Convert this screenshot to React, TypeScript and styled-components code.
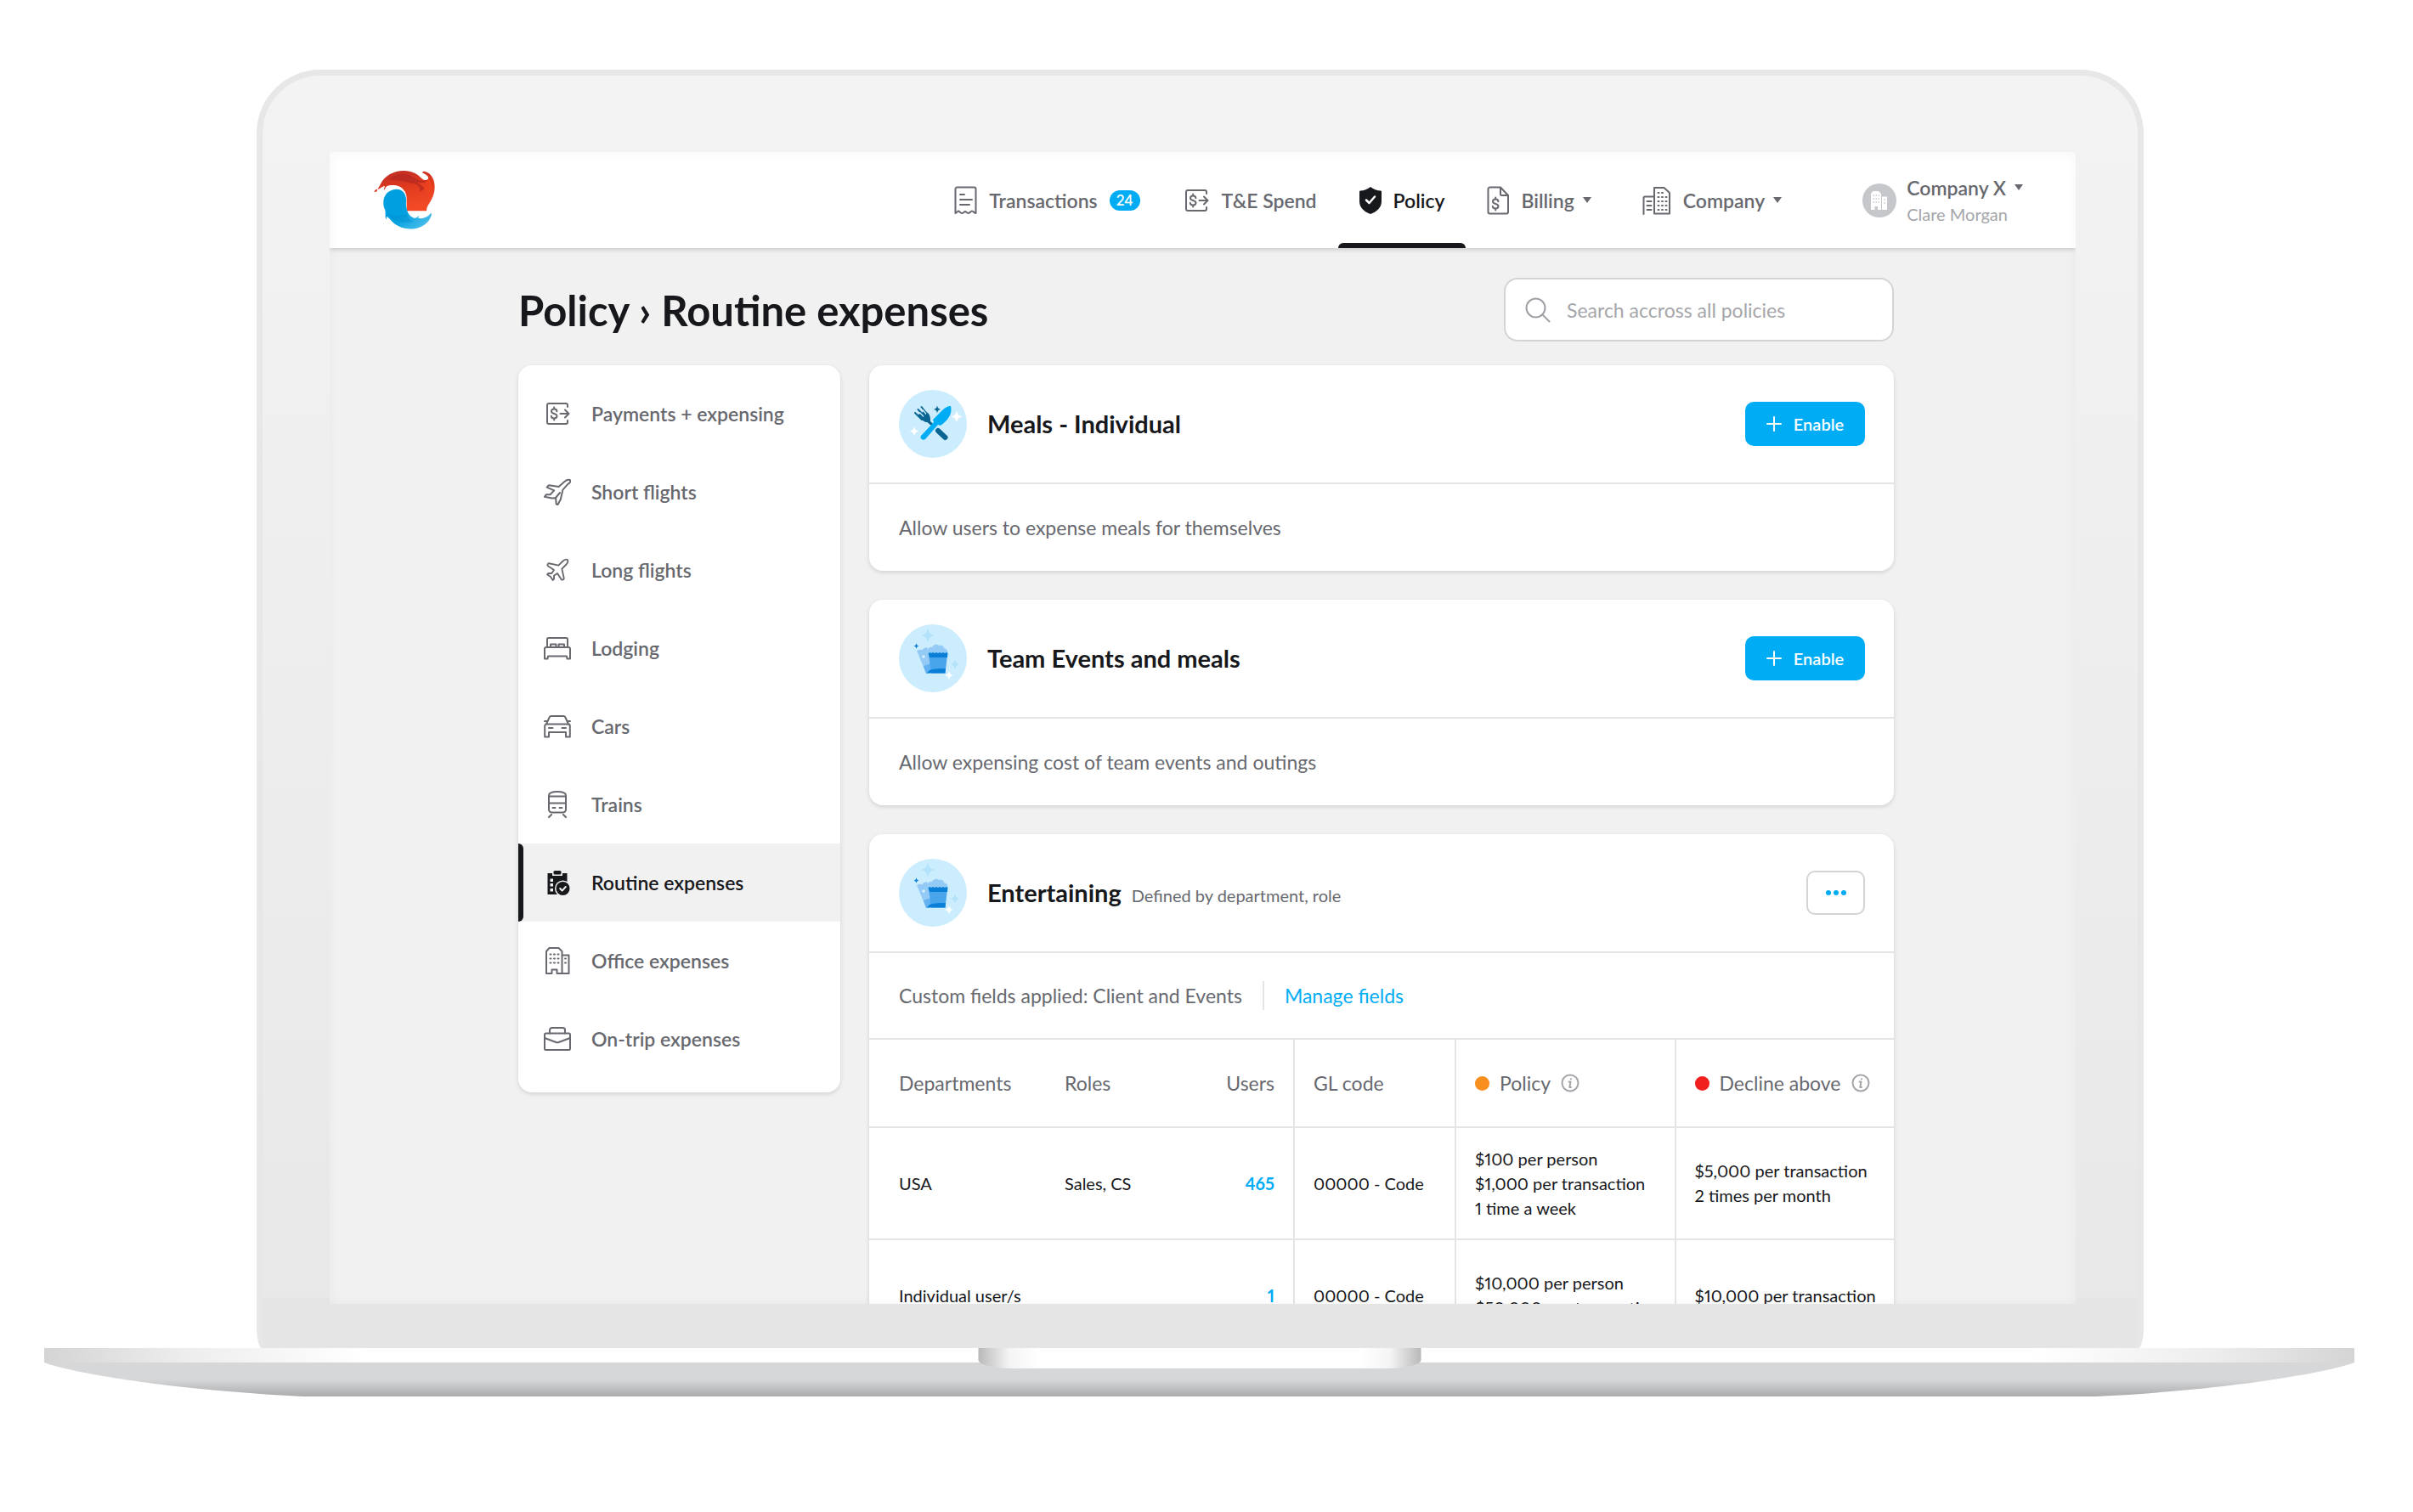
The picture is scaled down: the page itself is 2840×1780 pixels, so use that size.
import React from "react";
import styled, { createGlobalStyle, css } from "styled-components";
import { Plane } from "lucide-react";

const color = {
  ink: "#17181c",
  text: "#67696f",
  muted: "#a5a6aa",
  faint: "#c6c7cb",
  line: "#e4e5e6",
  page: "#f1f1f1",
  blue: "#00adf5",
};

const GlobalStyle = createGlobalStyle`
  *, *::before, *::after { box-sizing: border-box; }
  body { margin: 0; background: #fff; }
  body, button, input { font-family: Lato, "Open Sans", sans-serif; }
`;

/* ---------- laptop ---------- */

const Stage = styled.main`
  display: flex;
  flex-direction: column;
  height: 100vh;
  min-height: 900px;
  padding: 82px 69px 136px 52px;
`;

const Lid = styled.div`
  flex: 1;
  min-height: 0;
  display: flex;
  margin: 0 248px 0 250px;
  padding: 90px 73px 52px 79px;
  border: 7px solid #e7e7e7;
  border-bottom: 0;
  border-radius: 75px 75px 6px 6px / 75px 75px 26px 26px;
  background: linear-gradient(#f3f3f3 0, #e8e8e8 calc(100% - 59px), #e5e5e5 calc(100% - 59px));
`;

const Screen = styled.div`
  position: relative;
  flex: 1;
  min-width: 0;
  overflow: hidden;
  background: ${color.page};
  &::after {
    content: "";
    position: absolute;
    inset: 0;
    box-shadow: inset 0 0 14px rgba(0, 0, 0, 0.04);
    pointer-events: none;
  }
`;

const Base = styled.div`
  position: relative;
`;

const BaseStrip = styled.div`
  height: 17px;
  background: linear-gradient(90deg, #d4d4d4, #ededed 6%, #fff 14%, #fff 86%, #ededed 94%, #d4d4d4);
`;

const BaseShell = styled.svg`
  display: block;
  width: 100%;
  height: 40px;
`;

const Notch = styled.div`
  position: absolute;
  top: 0;
  left: 50%;
  width: 521px;
  height: 24px;
  transform: translateX(-50%);
  border-radius: 0 0 40px 40px / 0 0 10px 10px;
  background: linear-gradient(90deg, #b9b9b9, #f4f4f4 36px, #fff 72px, #fff calc(100% - 72px), #f4f4f4 calc(100% - 36px), #b9b9b9);
`;

/* ---------- top bar ---------- */

const TopBar = styled.header`
  position: relative;
  display: flex;
  align-items: stretch;
  justify-content: space-between;
  height: 113px;
  padding: 0 62px 0 44px;
  background: #fff;
  box-shadow: 0 2px 5px rgba(0, 0, 0, 0.16);
`;

const Brand = styled.a`
  display: flex;
  align-items: center;
`;

const NavGroup = styled.div`
  display: flex;
  gap: 70px;
`;

const Nav = styled.nav`
  display: flex;
`;

const NavItem = styled.a<{ $active?: boolean; $wide?: boolean }>`
  position: relative;
  display: flex;
  align-items: center;
  gap: 14px;
  padding: 0 25px;
  ${(p) => p.$wide && css`margin-left: 10px;`}
  font-size: 23px;
  line-height: 28px;
  font-weight: 600;
  text-decoration: none;
  color: ${(p) => (p.$active ? color.ink : color.text)};
  ${(p) =>
    p.$active &&
    css`
      &::after {
        content: "";
        position: absolute;
        left: 0;
        right: 0;
        bottom: 0;
        height: 6px;
        border-radius: 6px 6px 0 0;
        background: ${color.ink};
      }
    `}
  svg { flex: none; }
`;

const Badge = styled.span`
  display: grid;
  place-items: center;
  width: 36px;
  height: 24px;
  border-radius: 12px;
  background: ${color.blue};
  color: #fff;
  font-size: 17px;
  line-height: 20px;
`;

const Caret = styled.span`
  border: 5px solid transparent;
  border-top: 7px solid ${color.text};
  border-bottom: 0;
`;

const CaretLabel = styled.span`
  display: flex;
  align-items: center;
  gap: 10px;
`;

const Account = styled.button`
  display: flex;
  align-items: center;
  gap: 12px;
  padding: 0;
  border: 0;
  background: none;
  text-align: left;
`;

const Avatar = styled.span`
  display: grid;
  place-items: center;
  width: 40px;
  height: 40px;
  border-radius: 50%;
  background: ${color.faint};
`;

const AccountText = styled.span`
  display: grid;
  gap: 4px;
  font-size: 23px;
  line-height: 28px;
  font-weight: 600;
  color: ${color.text};
`;

const AccountUser = styled.span`
  font-size: 20px;
  line-height: 26px;
  font-weight: 400;
  color: ${color.muted};
`;

/* ---------- page ---------- */

const Page = styled.div`
  padding: 35px 214px 0 222px;
`;

const PageHead = styled.div`
  display: flex;
  align-items: center;
  justify-content: space-between;
  margin-bottom: 28px;
`;

const Title = styled.h1`
  margin: 0;
  font-size: 49px;
  line-height: 60px;
  font-weight: 700;
  color: ${color.ink};
`;

const Search = styled.label`
  display: flex;
  align-items: center;
  gap: 19px;
  width: 459px;
  height: 75px;
  padding: 0 23px;
  border: 2px solid #d3d4d6;
  border-radius: 16px;
  background: #fff;
`;

const SearchInput = styled.input`
  flex: 1;
  min-width: 0;
  padding: 0;
  border: 0;
  outline: 0;
  background: none;
  font-size: 23px;
  line-height: 28px;
  color: ${color.text};
  &::placeholder { color: ${color.muted}; opacity: 1; }
`;

const Columns = styled.div`
  display: grid;
  grid-template-columns: 379px minmax(0, 1fr);
  align-items: start;
  gap: 34px;
`;

const panel = css`
  border-radius: 16px;
  background: #fff;
  box-shadow: 0 2px 5px rgba(0, 0, 0, 0.13);
`;

const Sidebar = styled.nav`
  ${panel}
  padding: 11px 0 17px;
`;

const SideItem = styled.a<{ $active?: boolean }>`
  position: relative;
  display: flex;
  align-items: center;
  gap: 24px;
  height: 92px;
  padding: 0 30px;
  font-size: 23px;
  line-height: 28px;
  font-weight: 600;
  text-decoration: none;
  color: ${(p) => (p.$active ? color.ink : color.text)};
  background: ${(p) => (p.$active ? color.page : "transparent")};
  ${(p) =>
    p.$active &&
    css`
      &::before {
        content: "";
        position: absolute;
        inset: 0 auto 0 0;
        width: 6px;
        border-radius: 0 6px 6px 0;
        background: ${color.ink};
      }
    `}
  svg { flex: none; }
`;

const Cards = styled.div`
  display: grid;
  gap: 34px;
`;

const Card = styled.section`
  ${panel}
  overflow: hidden;
`;

const CardHead = styled.div`
  display: flex;
  align-items: center;
  gap: 24px;
  height: 140px;
  padding: 0 34px 0 35px;
  border-bottom: 2px solid ${color.line};
`;

const CardHeading = styled.div`
  display: flex;
  flex: 1;
  align-items: baseline;
  gap: 12px;
`;

const CardTitle = styled.h2`
  margin: 0;
  font-size: 29px;
  line-height: 36px;
  font-weight: 700;
  color: ${color.ink};
`;

const CardNote = styled.span`
  font-size: 20px;
  line-height: 26px;
  color: ${color.text};
`;

const CardBody = styled.div<{ $ruled?: boolean }>`
  display: flex;
  align-items: center;
  gap: 24px;
  height: 102px;
  padding: 0 34px 0 35px;
  ${(p) => p.$ruled && css`border-bottom: 2px solid ${color.line};`}
  font-size: 23px;
  line-height: 28px;
  color: ${color.text};
`;

const Divider = styled.span`
  width: 2px;
  height: 34px;
  background: ${color.line};
`;

const TextLink = styled.a`
  color: ${color.blue};
  text-decoration: none;
`;

const EnableButton = styled.button`
  display: flex;
  align-items: center;
  justify-content: center;
  gap: 14px;
  width: 141px;
  height: 52px;
  border: 0;
  border-radius: 10px;
  background: ${color.blue};
  color: #fff;
  font-size: 20px;
  line-height: 26px;
  font-weight: 600;
`;

const MoreButton = styled.button`
  display: flex;
  align-items: center;
  justify-content: center;
  width: 69px;
  height: 52px;
  border: 2px solid #d3d4d6;
  border-radius: 10px;
  background: #fff;
`;

/* ---------- policy table ---------- */

const Table = styled.table`
  width: 100%;
  table-layout: fixed;
  border-collapse: separate;
  border-spacing: 0;
  font-variant-numeric: proportional-nums;
`;

const Col = styled.col<{ $w?: number }>`
  ${(p) => p.$w && css`width: ${p.$w}px;`}
`;

const cell = css<{ $first?: boolean; $plain?: boolean; $end?: boolean }>`
  padding: 0 0 0 ${(p) => (p.$first ? 35 : p.$plain ? 0 : 22)}px;
  ${(p) => p.$end && css`padding-right: 22px;`}
  ${(p) => !p.$first && !p.$plain && css`border-left: 2px solid ${color.line};`}
  text-align: ${(p) => (p.$end ? "right" : "left")};
  white-space: nowrap;
`;

const Th = styled.th<{ $first?: boolean; $plain?: boolean; $end?: boolean }>`
  ${cell}
  height: 102px;
  font-size: 23px;
  line-height: 28px;
  font-weight: 400;
  color: ${color.text};
`;

const Td = styled.td<{ $first?: boolean; $plain?: boolean; $end?: boolean }>`
  ${cell}
  height: 132px;
  border-top: 2px solid ${color.line};
  font-size: 20px;
  line-height: 29px;
  color: ${color.ink};
`;

const UserCount = styled.a`
  color: ${color.blue};
  font-weight: 700;
  text-decoration: none;
`;

const HeadLabel = styled.span`
  display: flex;
  align-items: center;
  gap: 12px;
`;

const Dot = styled.span<{ $color: string }>`
  width: 17px;
  height: 17px;
  border-radius: 50%;
  background: ${(p) => p.$color};
`;

/* ---------- icons ---------- */

type IconProps = { w?: number; h?: number; sw?: number; children: React.ReactNode };

const Icon = ({ w = 32, h = 32, sw = 2, children }: IconProps) => (
  <svg
    width={w}
    height={h}
    viewBox={`0 0 ${w} ${h}`}
    fill="none"
    stroke="currentColor"
    strokeWidth={sw}
    strokeLinecap="round"
    strokeLinejoin="round"
    aria-hidden="true"
  >
    {children}
  </svg>
);

const Logo = () => (
  <svg width="90" height="90" viewBox="0 0 270 270" aria-hidden="true">
    <defs>
      <linearGradient id="red" x1="0" y1="0" x2="0.3" y2="1">
        <stop offset="0" stopColor="#b92a26" />
        <stop offset="0.5" stopColor="#e03a1e" />
        <stop offset="1" stopColor="#f24a27" />
      </linearGradient>
      <linearGradient id="wave" x1="0" y1="0" x2="1" y2="1">
        <stop offset="0.5" stopColor="#009fdf" />
        <stop offset="1" stopColor="#5cc4ee" />
      </linearGradient>
    </defs>
    <path
      fill="url(#red)"
      d="M34 104c2-10 8-16 12-24C60 48 94 30 130 30c28 0 48 12 62 26 8 8 20 10 24 2 2-10-10-16-22-22l6-4c18 2 30 14 36 34 8 30-2 56-14 76-8 12-12 18-12 30h-70V128c0-24-16-42-38-46-14-2-28-2-34 4-4 4-4 10-8 12 0-8 4-12 2-14-10 2-18 12-28 12-6 0-6 6-10 8z"
    />
    <path fill="#b52822" d="M74 62c26-24 66-26 92-8 16 10 32 16 42 10 4 14-4 34-22 40 4-14-4-24-22-28-30-8-56-14-90-14z" opacity="0.75" />
    <path fill="#f0431f" d="M176 72c18 4 36 0 42-14 14 20 14 46 2 68-6-22-20-44-44-54z" opacity="0.8" />
    <path
      fill="url(#wave)"
      d="M104 95c24 0 36 20 34 44-2 28 8 52 28 58 8 2 12-4 18-9-1 5-4 8-3 10 18 2 34-4 44-18l3 2c-4 26-28 48-60 53-34 4-66-8-84-30-6-8-8-8-14-14-2 3 0 8-3 10-4-6-1-22-3-32-14-26-6-72 40-74z"
    />
    <path fill="#008ed0" d="M66 172c20 22 44 18 74 12 6 16 14 22 26 24-36 12-78 4-100-36z" opacity="0.45" />
  </svg>
);

const dollar = "M15.4 13.2c0-1.7-1.4-2.6-3.2-2.6S9 11.6 9 13.3c0 3.6 6.5 1.8 6.5 5.4 0 1.7-1.5 2.7-3.3 2.7s-3.4-1-3.4-2.7M12.2 8.4v2.2M12.2 21.4v2.2";

const SpendIcon = () => (
  <Icon>
    <path d="M28 8V6a2 2 0 0 0-2-2H6a2 2 0 0 0-2 2v20a2 2 0 0 0 2 2h20a2 2 0 0 0 2-2v-2" />
    <path d={dollar} />
    <path d="M19.5 16H29M25 11.5l4.5 4.5-4.5 4.5" />
  </Icon>
);

const ReceiptIcon = () => (
  <Icon w={27} h={34}>
    <path d="M1.5 32V3.5a2 2 0 0 1 2-2h20a2 2 0 0 1 2 2V32c-2 0-2.600-2.500-4.500-2.500S18.500 32 16.500 32s-2-2-3.500-2-2 2-4 2-2.500-2.500-4-2.500S3 32 1.500 32z" />
    <path d="M7 10h5M7 16h14M7 22h11" />
  </Icon>
);

const ShieldIcon = () => (
  <Icon w={26} h={32} sw={2.5}>
    <path
      d="M13 0c3 2.500 8 4.500 12 4.500 1 0 1 1 1 2V17c0 7-5 12-13 15C5 29 0 24 0 17V6.500c0-1 0-2 1-2C5 4.500 10 2.500 13 0z"
      fill="currentColor"
      stroke="none"
    />
    <path d="M8 15.500l3.500 3.500 6.500-7.500" stroke="#fff" />
  </Icon>
);

const InvoiceIcon = () => (
  <Icon w={26} h={34}>
    <path d="M3.500 1.500H16L25 11v19.500a2 2 0 0 1-2 2H3.500a2 2 0 0 1-2-2v-27a2 2 0 0 1 2-2z" />
    <path d="M16 2v7.500a1.500 1.500 0 0 0 1.500 1.500H25" />
    <g transform="translate(-2 5)"><path d={dollar} /></g>
  </Icon>
);

const CompanyIcon = () => (
  <Icon w={34} h={34}>
    <path d="M1.500 33V14a1.500 1.500 0 0 1 1.500-1.500h11M14 32.500V2h11.500l6.500 6v24.500z" />
    <path d="M5.500 18h5M5.500 23h5M5.500 28h5M18.500 8h1M23 8h1M18.500 13h1M23 13h1M27.500 13h1M18.500 18h1M23 18h1M27.500 18h1M18.500 23h1M23 23h1M27.500 23h1M18.500 28h1M23 28h1M27.500 28h1" />
  </Icon>
);

const ShortFlightIcon = () => (
  <Icon>
    <path d="M31 2.200c-1.800-.8-4.600.2-6.600 1.800L17.600 10 6 8.200 3.600 10.600l8.600 3.800-4.600 4.800H3L.9 21.800l8.600 1.600 4.600-.2.6 7.400 1.800.4 3.300-6 2.600-11.400 6.200-7C30.600 6 31.800 4 31 2.200z" />
    <path d="M14 23l5-6" />
  </Icon>
);

const BedIcon = () => (
  <Icon>
    <path d="M4 15V5.500A1.500 1.500 0 0 1 5.500 4h21A1.500 1.500 0 0 1 28 5.500V15M8 15v-3.500h6.500V15M17.500 15v-3.500H24V15" />
    <path d="M1 28.500V17a2 2 0 0 1 2-2h26a2 2 0 0 1 2 2v11.500h-3.500L27 25.500H5l-.5 3z" />
  </Icon>
);

const CarIcon = () => (
  <Icon>
    <path d="M3 13.500l3.600-8A2.500 2.500 0 0 1 9 4h14a2.500 2.500 0 0 1 2.400 1.500l3.600 8M1 10h2.500M28.500 10H31" />
    <path d="M1.200 28.500v-13a2 2 0 0 1 2-2h25.600a2 2 0 0 1 2 2v13H26V23H6v5.500zM6 18h4.500M21.500 18H26" />
  </Icon>
);

const TrainIcon = () => (
  <Icon>
    <path d="M6 5.500C6 2.500 10 1 16 1s10 1.500 10 4.500V22a3.500 3.500 0 0 1-3.500 3.500h-13A3.500 3.500 0 0 1 6 22zM6 6.500h20M6 14.500h20M10.500 20h3M18.500 20h3M9 28l-3 3M23 28l3 3" />
  </Icon>
);

const ClipboardIcon = () => (
  <Icon>
    <g stroke="none">
      <path fill="currentColor" d="M4.500 5H10v3h12V5h5.500v25h-23z" />
      <rect x="11.500" y="2" width="9" height="4.500" rx="1.500" fill="currentColor" />
      <path fill={color.page} d="M7.500 11.500h3.500V15H7.500zM7.500 17h3.500v3.500H7.500zM7.500 23h3.500v3.500H7.500z" />
      <circle cx="22.500" cy="23" r="9.500" fill={color.page} />
      <circle cx="22.500" cy="23" r="8" fill="currentColor" />
    </g>
    <path d="M19.200 23l2.400 2.600 4.200-4.600" stroke={color.page} />
  </Icon>
);

const OfficeIcon = () => (
  <Icon>
    <path d="M3 31V5l3.500-4h11L21.500 5v26h-6v-4.500h-6V31zM21.500 9.500h8V31h-8" />
    <path d="M7.500 8.500h1M12 8.500h1M16.500 8.500h1M7.500 13.500h1M12 13.500h1M16.500 13.500h1M7.500 18.500h1M12 18.500h1M16.500 18.500h1M25 13.500h1M25 18.500h1" />
  </Icon>
);

const BriefcaseIcon = () => (
  <Icon>
    <path d="M7 9.500V5.500a2.500 2.500 0 0 1 2.500-2.500h13A2.500 2.500 0 0 1 25 5.500v4" />
    <rect x="1" y="9.500" width="30" height="19.500" rx="1.500" />
    <path d="M1 15l13.500 5a4 4 0 0 0 3 0L31 15" />
  </Icon>
);

const AvatarIcon = () => (
  <svg width="20" height="22" viewBox="0 0 20 22" aria-hidden="true">
    <path fill="#fff" d="M0 22V3l2.500-3h6.500l3 3v19H8v-4H4.500v4zM13 6.500h6V22h-6z" />
    <path stroke={color.faint} strokeWidth="1.500" d="M2.500 5h1.500M5.500 5H7M8.500 5H10M2.500 9h1.500M5.500 9H7M8.500 9H10M2.500 13h1.500M5.500 13H7M8.500 13H10M15.500 10H17M15.500 14H17" />
  </svg>
);

const SearchIcon = () => (
  <Icon w={30} h={30}>
    <g stroke="#a0a1a6">
      <circle cx="12.500" cy="12.500" r="11" />
      <path d="M20.500 20.500l8 8" />
    </g>
  </Icon>
);

const PlusIcon = () => (
  <Icon w={18} h={18}>
    <path d="M9 1v16M1 9h16" />
  </Icon>
);

const MoreIcon = () => (
  <svg width="24" height="6" viewBox="0 0 24 6" fill={color.blue} aria-hidden="true">
    <circle cx="3" cy="3" r="3" />
    <circle cx="12" cy="3" r="3" />
    <circle cx="21" cy="3" r="3" />
  </svg>
);

const InfoIcon = () => (
  <Icon w={22} h={22}>
    <g stroke={color.muted}>
      <circle cx="11" cy="11" r="9.500" />
      <path d="M9.500 9.500h2l-1.200 6.500h1.700M11.800 6.200h.3" />
    </g>
  </Icon>
);

const Spark = ({ x, y, r, fill }: { x: number; y: number; r: number; fill: string }) => (
  <path
    fill={fill}
    transform={`translate(${x} ${y}) scale(${r})`}
    d="M0-1.100C.15-.4.4-.15 1 0 .4.15.15.4 0 1.100-.15.4-.4.15-1 0-.4-.15-.15-.4 0-1.100z"
  />
);

const MealArt = () => (
  <svg width="80" height="80" viewBox="0 0 80 80" aria-hidden="true">
    <circle cx="40" cy="40" r="40" fill="#ccedfd" />
    <g stroke="#0b6592" strokeLinecap="round" fill="none">
      <path d="M46 48l8.500 8" strokeWidth="6" />
      <path d="M19 27l8 8M22.500 23l8.500 9M26.500 20l7 9" strokeWidth="2" />
      <path d="M30 33l8 7" strokeWidth="3" />
    </g>
    <path fill="#0b6592" d="M22 29l4-1 4-4 5 4c2 3 2 6 2 9-3 2-7 1-9-1z" />
    <path d="M24.500 26.500l4.500 5M28 23.500l4 5" stroke="#ccedfd" strokeWidth="1.300" />
    <path fill={color.blue} d="M61 19c2 8-2 16-12 23l-3-1-15 17c-3 2-7-1-5-4l15-16-1-3 11-11c3-3 6-5 10-5z" />
    <Spark x={45} y={23} r={4} fill="#0b6592" />
    <Spark x={68} y={31.500} r={6.500} fill="#fff" />
    <Spark x={18} y={48.500} r={5.500} fill="#fff" />
  </svg>
);

const EventArt = () => (
  <svg width="80" height="80" viewBox="0 0 80 80" aria-hidden="true">
    <circle cx="40" cy="40" r="40" fill="#ccedfd" />
    <Spark x={34} y={13} r={8} fill="#b3e3fb" />
    <Spark x={66} y={47} r={5.500} fill="#b3e3fb" />
    <path fill="#93cbf6" d="M21 31l4-1.500a2 2 0 0 0 3.600-1L33 27l9 28-10 3z" />
    <path fill="#62b2f1" d="M29 49l9-3 4 10-10 2z" />
    <circle cx="29" cy="38" r="1.700" fill="#d9f1fe" />
    <path fill="#93cbf6" d="M34 35c-2-5 1-9 5-8 2-4 6-4 8-2 4-1 6 1 6 3 4 1 5 4 4 7z" />
    <path fill="#48a5ec" d="M35 36h22l-2.500 21.500H38z" />
    <path fill="#0a7fd8" d="M34.500 34l2-1 1.500 1 2-1 2 1 2-1 2 1 2-1 2 1 2-1 2 1 2-1 1.500 1-.5 5H36zM36 54c6-2 12-2 19-2l-.5 5.500H33z" />
    <Spark x={20.500} y={25.500} r={3} fill="#0a7fd8" />
    <Spark x={59} y={60} r={5} fill="#fff" />
  </svg>
);

/* ---------- data ---------- */

const sections = [
  { label: "Payments + expensing", icon: <SpendIcon /> },
  { label: "Short flights", icon: <ShortFlightIcon /> },
  { label: "Long flights", icon: <Plane size={32} strokeWidth={1.4} /> },
  { label: "Lodging", icon: <BedIcon /> },
  { label: "Cars", icon: <CarIcon /> },
  { label: "Trains", icon: <TrainIcon /> },
  { label: "Routine expenses", icon: <ClipboardIcon />, active: true },
  { label: "Office expenses", icon: <OfficeIcon /> },
  { label: "On-trip expenses", icon: <BriefcaseIcon /> },
];

const policies = [
  { title: "Meals - Individual", text: "Allow users to expense meals for themselves", art: <MealArt /> },
  { title: "Team Events and meals", text: "Allow expensing cost of team events and outings", art: <EventArt /> },
];

const rows = [
  {
    department: "USA",
    roles: "Sales, CS",
    users: "465",
    code: "00000 - Code",
    policy: ["$100 per person", "$1,000 per transaction", "1 time a week"],
    decline: ["$5,000 per transaction", "2 times per month"],
  },
  {
    department: "Individual user/s",
    roles: "",
    users: "1",
    code: "00000 - Code",
    policy: ["$10,000 per person", "$50,000 per transaction"],
    decline: ["$10,000 per transaction"],
  },
];

const Lines = ({ items }: { items: string[] }) => (
  <>
    {items.map((line) => (
      <div key={line}>{line}</div>
    ))}
  </>
);

export default function App() {
  return (
    <>
      <GlobalStyle />
      <Stage>
        <Lid>
          <Screen>
            <TopBar>
              <Brand href="#" aria-label="Home">
                <Logo />
              </Brand>
              <NavGroup>
                <Nav aria-label="Main">
                  <NavItem href="#">
                    <ReceiptIcon />
                    Transactions
                    <Badge>24</Badge>
                  </NavItem>
                  <NavItem href="#">
                    <SpendIcon />
                    T&amp;E Spend
                  </NavItem>
                  <NavItem href="#" $active aria-current="page">
                    <ShieldIcon />
                    Policy
                  </NavItem>
                  <NavItem href="#">
                    <InvoiceIcon />
                    <CaretLabel>
                      Billing <Caret />
                    </CaretLabel>
                  </NavItem>
                  <NavItem href="#" $wide>
                    <CompanyIcon />
                    <CaretLabel>
                      Company <Caret />
                    </CaretLabel>
                  </NavItem>
                </Nav>
                <Account type="button">
                  <Avatar>
                    <AvatarIcon />
                  </Avatar>
                  <AccountText>
                    <CaretLabel>
                      Company X <Caret />
                    </CaretLabel>
                    <AccountUser>Clare Morgan</AccountUser>
                  </AccountText>
                </Account>
              </NavGroup>
            </TopBar>

            <Page>
              <PageHead>
                <Title>Policy › Routine expenses</Title>
                <Search>
                  <SearchIcon />
                  <SearchInput type="text" aria-label="Search policies" placeholder="Search accross all policies" />
                </Search>
              </PageHead>

              <Columns>
                <Sidebar aria-label="Policy sections">
                  {sections.map((s) => (
                    <SideItem key={s.label} href="#" $active={s.active}>
                      {s.icon}
                      {s.label}
                    </SideItem>
                  ))}
                </Sidebar>

                <Cards>
                  {policies.map((p) => (
                    <Card key={p.title}>
                      <CardHead>
                        {p.art}
                        <CardHeading>
                          <CardTitle>{p.title}</CardTitle>
                        </CardHeading>
                        <EnableButton type="button">
                          <PlusIcon />
                          Enable
                        </EnableButton>
                      </CardHead>
                      <CardBody>{p.text}</CardBody>
                    </Card>
                  ))}

                  <Card>
                    <CardHead>
                      <EventArt />
                      <CardHeading>
                        <CardTitle>Entertaining</CardTitle>
                        <CardNote>Defined by department, role</CardNote>
                      </CardHeading>
                      <MoreButton type="button" aria-label="More options">
                        <MoreIcon />
                      </MoreButton>
                    </CardHead>
                    <CardBody $ruled>
                      Custom fields applied: Client and Events
                      <Divider />
                      <TextLink href="#">Manage fields</TextLink>
                    </CardBody>
                    <Table>
                      <colgroup>
                        <Col $w={230} />
                        <Col $w={146} />
                        <Col $w={123} />
                        <Col $w={190} />
                        <Col />
                        <Col />
                      </colgroup>
                      <thead>
                        <tr>
                          <Th scope="col" $first>Departments</Th>
                          <Th scope="col" $plain>Roles</Th>
                          <Th scope="col" $plain $end>Users</Th>
                          <Th scope="col">GL code</Th>
                          <Th scope="col">
                            <HeadLabel>
                              <Dot $color="#f98f1f" />
                              Policy
                              <InfoIcon />
                            </HeadLabel>
                          </Th>
                          <Th scope="col">
                            <HeadLabel>
                              <Dot $color="#f21f1f" />
                              Decline above
                              <InfoIcon />
                            </HeadLabel>
                          </Th>
                        </tr>
                      </thead>
                      <tbody>
                        {rows.map((r) => (
                          <tr key={r.department}>
                            <Td $first>{r.department}</Td>
                            <Td $plain>{r.roles}</Td>
                            <Td $plain $end>
                              <UserCount href="#">{r.users}</UserCount>
                            </Td>
                            <Td>{r.code}</Td>
                            <Td>
                              <Lines items={r.policy} />
                            </Td>
                            <Td>
                              <Lines items={r.decline} />
                            </Td>
                          </tr>
                        ))}
                      </tbody>
                    </Table>
                  </Card>
                </Cards>
              </Columns>
            </Page>
          </Screen>
        </Lid>

        <Base>
          <BaseStrip />
          <BaseShell viewBox="0 0 2719 40" preserveAspectRatio="none" aria-hidden="true">
            <defs>
              <linearGradient id="shell" x1="0" y1="0" x2="0" y2="1">
                <stop offset="0.5" stopColor="#d6d7d9" />
                <stop offset="0.8" stopColor="#bcbdbf" />
                <stop offset="1" stopColor="#a9abad" />
              </linearGradient>
            </defs>
            <path fill="url(#shell)" d="M0 0h2719C2695 10 2579 32 2414 40H305C140 32 24 10 0 0z" />
          </BaseShell>
          <Notch />
        </Base>
      </Stage>
    </>
  );
}
